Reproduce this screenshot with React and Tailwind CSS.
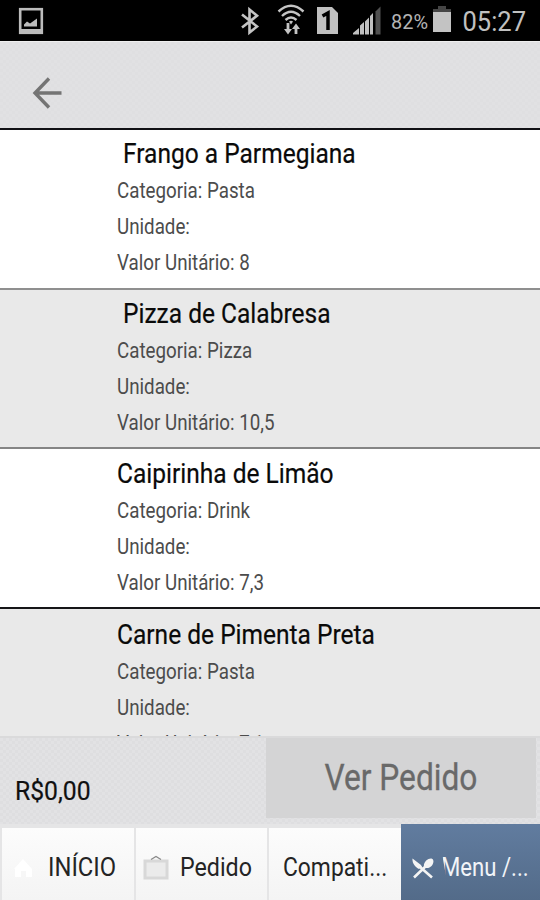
import React from "react";

const items = [
  { name: "Frango a Parmegiana", category: "Pasta", value: "8", indent: true },
  { name: "Pizza de Calabresa", category: "Pizza", value: "10,5", indent: true },
  { name: "Caipirinha de Limão", category: "Drink", value: "7,3", indent: false },
  { name: "Carne de Pimenta Preta", category: "Pasta", value: "7,1", indent: false },
];

const rowStyles = [
  "h-[160px] bg-white border-b-2 border-[#8f8f8f] pt-[6px]",
  "h-[159px] bg-[#e9e9e9] border-b-2 border-[#858585] pt-[6px]",
  "h-[160px] bg-white border-b-2 border-[#151517] pt-[7px]",
  "h-[160px] bg-[#e9e9e9] pt-[8px]",
];

const tab = "ml-[2px] flex h-[72px] items-center bg-linear-to-b from-[#fcfcfc] to-[#f4f4f4] pt-[7px]";

function StatusBar() {
  return (
    <header className="h-[41px] shrink-0 bg-black">
      <svg width="540" height="41" viewBox="0 0 540 41" fill="none">
        <rect x="20.2" y="9.2" width="21.6" height="23.6" stroke="#bcbcbc" strokeWidth="2.6" />
        <path d="M20 31h22" stroke="#bcbcbc" strokeWidth="4" />
        <path d="M24 26.500v-2l3-3 3 2 7-5v8z" fill="#bcbcbc" />
        <path d="M242 14.500l15 12-7.500 6V9.500l7.500 6.200L242 27.500" stroke="#c4c4c4" strokeWidth="2.6" />
        <g stroke="#c4c4c4" strokeWidth="2.400">
          <path d="M278.500 11.500q12.500-11.500 25 0M282 16q9-8.500 18 0M285.500 20q5.500-5 11 0" />
          <path d="M288 23v7M296 34v-7" strokeWidth="2.8" />
        </g>
        <path d="M284 29h8l-4 5.500zM292 29h8l-4-5.500zM289 21.500q2-1.500 4 0l-2 3z" fill="#c4c4c4" />
        <path d="M317 7h15l6 6v21h-21z" fill="#c0c0c0" />
        <path d="M322.500 16l5.500-3v17" stroke="#000" strokeWidth="3.500" />
        <path d="M353 34.500v-1.500l6-5v6.500zM360 34.500v-9l4-3.500v12.500zM365 34.500V21.500l4-4v17zM370 34.500V16l3-3v21.500z" fill="#c0c0c0" />
        <path d="M375.500 34.500V11.500l5-5v28z" fill="#505050" />
        <text x="391" y="28.500" fontFamily="Roboto, sans-serif" fontSize="21" textLength="37" lengthAdjust="spacingAndGlyphs" fill="#b4b4b4">82%</text>
        <path d="M433 12V9h5V6h8v3h5v3z" fill="#454545" />
        <rect x="433" y="12" width="18" height="20" fill="#c3c3c3" />
        <text x="462.500" y="31.300" fontFamily="Roboto, sans-serif" fontSize="27" textLength="63.500" lengthAdjust="spacingAndGlyphs" fill="#c0c0c0">05:27</text>
      </svg>
    </header>
  );
}

function MenuRow({ item, index }) {
  return (
    <article className={`shrink-0 pl-[117px] whitespace-nowrap ${rowStyles[index]}`}>
      <h2 className={`h-[37px] leading-[36px] text-[27px] text-[#0a0a0a] origin-left scale-x-[.908] [-webkit-text-stroke:0.2px_#0a0a0a] ${item.indent ? "ml-[6px]" : ""}`}>{item.name}</h2>
      <div className="origin-left scale-x-[.872] text-[21.500px] leading-[36px] text-[#4c4c4c]">
        <p>Categoria: {item.category}</p>
        <p>Unidade:</p>
        <p>Valor Unitário: {item.value}</p>
      </div>
    </article>
  );
}

export default function App() {
  return (
    <main className="flex h-[900px] w-[540px] flex-col overflow-hidden bg-[#e5e5e6] font-[Roboto,sans-serif]">
      <StatusBar />
      <nav className="h-[89px] shrink-0 border-t border-b-2 border-t-[#efefef] border-b-[#101014] bg-[#e0e0e2] bg-[repeating-conic-gradient(#dfdfe1_0_25%,#e1e1e3_0_50%)] bg-[length:6px_6px] pt-[34px] pl-[32px]">
        <svg width="31" height="34" viewBox="0 0 31 34" fill="none" stroke="#747474" strokeWidth="3.400">
          <path d="M29.500 17H3M17 2.500L3 17 17 31.500" />
        </svg>
      </nav>
      <section className="flex h-[606px] shrink-0 flex-col overflow-hidden">
        {items.map((item, i) => <MenuRow key={item.name} item={item} index={i} />)}
      </section>
      <section className="flex h-[88px] shrink-0 border-t-2 border-[#dadadb] bg-[#dfdfe1] bg-[repeating-conic-gradient(#dedee0_0_25%,#e2e2e4_0_50%)] bg-[length:6px_6px]">
        <div className="w-[266px] pt-[36px] pl-[15px] text-[26px] leading-[34px] text-[#101010]">
          <span className="inline-block origin-left scale-x-[.95] [-webkit-text-stroke:0.2px_#101010]">R$0,00</span>
        </div>
        <button className="h-[80px] w-[270px] bg-[#d4d4d5] text-[36px] leading-[78px] text-[#696969]">
          <span className="inline-block scale-x-[.88] [-webkit-text-stroke:0.3px_#696969]">Ver Pedido</span>
        </button>
      </section>
      <footer className="flex h-[76px] shrink-0 items-end text-[25px] whitespace-nowrap text-[#242424]">
        <div className={`w-[132px] pl-[10px] ${tab}`}>
          <svg width="22" height="22" viewBox="0 0 22 22"><path d="M2 12L11 2l9 10v8h-6v-6H9v6H3v-8z" fill="#fff" /></svg>
          <span className="ml-[14px] origin-left scale-x-[.95]">INÍCIO</span>
        </div>
        <div className={`w-[131px] pl-[7px] ${tab}`}>
          <svg width="26" height="26" viewBox="0 0 26 26" fill="none"><rect x="2" y="6" width="22" height="17" fill="#ebebeb" stroke="#d8d8d8" strokeWidth="3" /><path d="M8 4.500l5-3 5 3" stroke="#888" strokeWidth="1.300" /></svg>
          <span className="ml-[11px] origin-left scale-x-[.93]">Pedido</span>
        </div>
        <div className={`w-[132px] pl-[14px] ${tab}`}>
          <span className="origin-left scale-x-[.913]">Compati...</span>
        </div>
        <div className="flex h-[76px] w-[139px] items-center bg-linear-to-b from-[#617c9f] to-[#536b89] pt-[11px] pl-[10px] text-[#f2f4f8]">
          <svg width="24" height="24" viewBox="0 0 24 24" fill="none"><path d="M3 21.500L16 9M8 10l13 11.500" stroke="#f4f4f4" strokeWidth="2.600" /><path d="M1.500 2.500L10 9l1 2-3 2C4 11 1 7 1.500 2.500zM13 11c-1-5 4-9 7.500-8.500C25 4 21 13 15 12z" fill="#f4f4f4" /></svg>
          <span className="ml-[6px] origin-left scale-x-[.885] [clip-path:polygon(0_0,100%_0,100%_100%,8%_100%)]">Menu /...</span>
        </div>
      </footer>
    </main>
  );
}
